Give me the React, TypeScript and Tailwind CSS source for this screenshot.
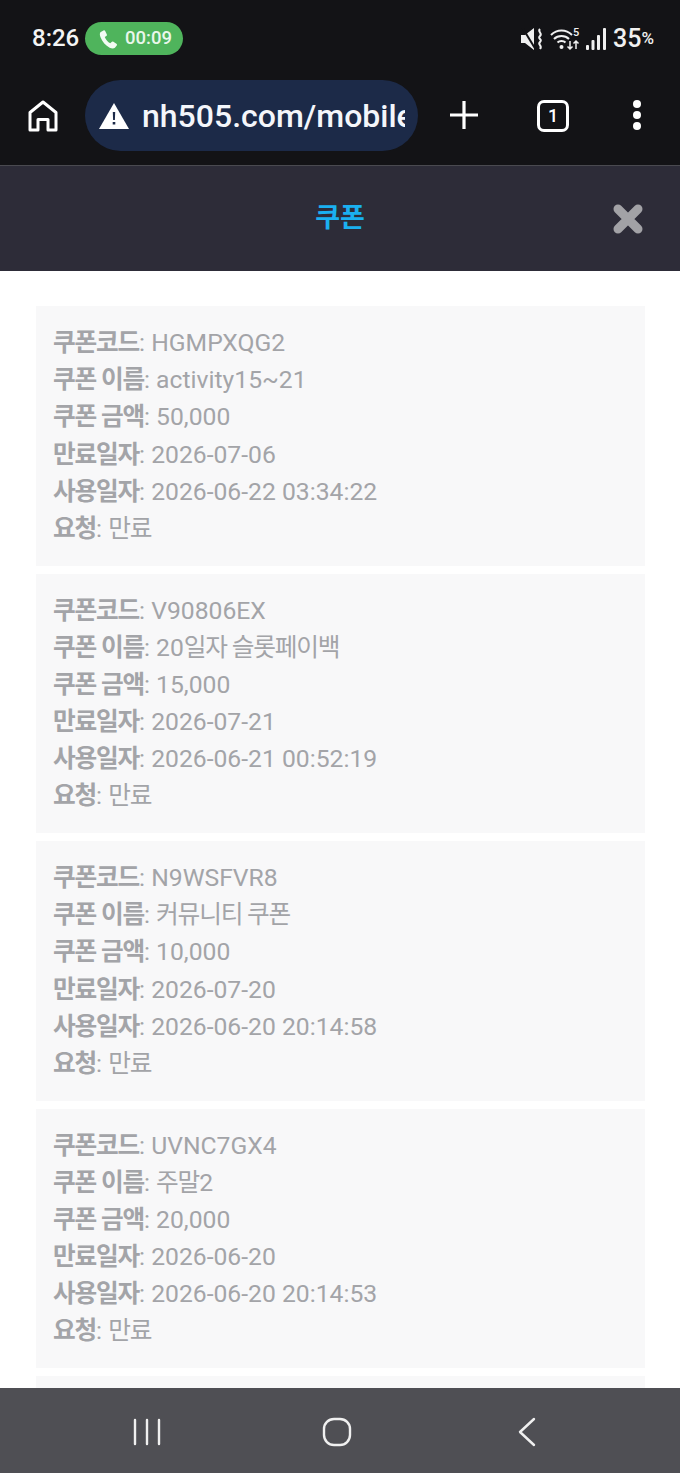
const coupons = [
  { code: 'HGMPXQG2', name: 'activity15~21', amount: '50,000', expires: '2026-07-06', used: '2026-06-22 03:34:22' },
  { code: 'V90806EX', name: '20일자 슬롯페이백', amount: '15,000', expires: '2026-07-21', used: '2026-06-21 00:52:19' },
  { code: 'N9WSFVR8', name: '커뮤니티 쿠폰', amount: '10,000', expires: '2026-07-20', used: '2026-06-20 20:14:58' },
  { code: 'UVNC7GX4', name: '주말2', amount: '20,000', expires: '2026-06-20', used: '2026-06-20 20:14:53' },
];

function StatusBar() {
  return (
    <div className="h-[76px] pt-[22px] pl-[32px] pr-[26px] flex items-start justify-between">
      <div className="flex items-center gap-[7px]">
        <span className="text-[24px] leading-[33px] font-medium text-[#f4f4f4] w-[46px]">8:26</span>
        <div className="w-[98px] h-[33px] rounded-full bg-[#4fb45c] flex items-center pl-[13px] gap-[7px]">
          <svg width="20" height="20" viewBox="0 0 24 24" fill="#f2fbf3">
            <path d="M6.6 1.8 3.3 3.6C1.9 4.5 1.9 7 3 9.8c2.2 5.4 6.2 10 11 12.6 2.4 1.2 5 1.3 6.3 0l2.2-2.6c.6-.8.4-1.6-.4-2.2l-3.6-2.4c-.8-.5-1.6-.4-2.2.3l-1.6 1.7c-2.8-1.5-5.2-4.4-6.6-7.6l1.9-1.3c.7-.5.9-1.3.5-2.1L8.6 2.3c-.5-.8-1.2-1-2-.5Z" />
          </svg>
          <span className="text-[18.5px] leading-none font-medium text-[#e9f7eb]">00:09</span>
        </div>
      </div>
      <div className="flex items-center h-[33px] text-[#f0f0f0]">
        <svg width="23" height="22" viewBox="0 0 23 22" fill="none" className="mr-[6px]">
          <path d="M0 7h4l9-7v22l-9-7H0Z" fill="#f0f0f0" />
          <path d="M1-1 15 22" stroke="#131316" strokeWidth="2" />
          <path d="M19 1c-3 3 3 4 0 7s3 3 0 6 3 3 0 7" stroke="#f0f0f0" strokeWidth="2" />
        </svg>
        <svg width="30" height="24" viewBox="0 0 30 24" fill="none" className="mr-[6px]">
          <path d="M1 8c6-6 15-6 21 0M4 12c4-4 11-4 15 0M7.5 15.5c2-2 6-2 8 0" stroke="#f0f0f0" strokeWidth="2" />
          <circle cx="11.5" cy="20" r="2" fill="#f0f0f0" />
          <path d="M20 14v8m-2.5-2.5 2.5 2.5 2.5-2.500M26 22v-8m-2.5 2.5 2.5-2.5 2.500 2.500" stroke="#f0f0f0" strokeWidth="1.5" />
          <text x="23" y="9" fontSize="11" fontWeight="500" fill="#f0f0f0" fontFamily="Roboto, sans-serif">5</text>
        </svg>
        <svg width="20" height="22" viewBox="0 0 20 22" fill="#f0f0f0" className="mr-[7px]">
          <rect x="0" y="17" width="3" height="5" rx="1" />
          <rect x="5.5" y="12" width="3" height="10" rx="1" />
          <rect x="11" y="7" width="3" height="15" rx="1" />
          <rect x="17" y="0" width="3" height="22" rx="1" />
        </svg>
        <span className="text-[25px] leading-none font-medium text-[#f0f0f0]">35</span>
        <span className="text-[17px] leading-none font-medium text-[#f0f0f0]">%</span>
      </div>
    </div>
  );
}

function Toolbar() {
  return (
    <div className="h-[89px] flex items-start pl-[28px]">
      <svg width="30" height="32" viewBox="0 0 30 32" fill="none" stroke="white" strokeWidth="3" strokeLinejoin="round" className="mt-[24px] shrink-0">
        <path d="M2 30V12.5L15 2l13 10.5V30h-8V19.5H10V30Z" />
      </svg>
      <div className="ml-[27px] w-[333px] h-[71px] mt-[4px] rounded-full bg-[#1c2a48] flex items-center pl-[14px] pr-[13px] shrink-0">
        <svg width="30" height="26" viewBox="0 0 30 26" className="shrink-0">
          <path d="M15 0 30 26H0Z" fill="white" />
          <path d="M13.8 9h2.4l-.3 8h-1.8ZM13.7 19h2.600v2.600h-2.600Z" fill="#1c2a48" />
        </svg>
        <span className="ml-[13px] overflow-hidden whitespace-nowrap text-[32px] leading-none font-medium text-[#f4f6fb]">nh505.com/mobile</span>
      </div>
      <svg width="30" height="30" viewBox="0 0 30 30" stroke="white" strokeWidth="3.2" className="ml-[31px] mt-[24px] shrink-0">
        <path d="M15 1v28M1 15h28" />
      </svg>
      <div className="ml-[58px] mt-[24px] w-[32px] h-[32px] rounded-[7px] border-[3px] border-white flex items-center justify-center text-white text-[18px] leading-none font-medium shrink-0">
        1
      </div>
      <div className="ml-[64px] mt-[24px] flex flex-col gap-[3px] shrink-0">
        <div className="w-[8px] h-[8px] rounded-full bg-white"></div>
        <div className="w-[8px] h-[8px] rounded-full bg-white"></div>
        <div className="w-[8px] h-[8px] rounded-full bg-white"></div>
      </div>
    </div>
  );
}

// hangul in the shot sets tighter than Noto does, latin stays normal
function Tight({ text }: { text: string }) {
  return (
    <>
      {text.split(/([가-힣 ]+)/).map((part, i) =>
        /[가-힣]/.test(part) ? (
          <span key={i} className="tracking-[-1.2px]">{part}</span>
        ) : (
          part
        ),
      )}
    </>
  );
}

function CouponCard({ coupon }: { coupon: (typeof coupons)[number] }) {
  const rows = [
    ['쿠폰코드', coupon.code],
    ['쿠폰 이름', coupon.name],
    ['쿠폰 금액', coupon.amount],
    ['만료일자', coupon.expires],
    ['사용일자', coupon.used],
    ['요청', '만료'],
  ];
  return (
    <div className="bg-[#f8f8f9] h-[259.5px] px-[17px] py-[18px] shrink-0">
      {rows.map(([label, value]) => (
        <div key={label} className="h-[37.2px] leading-[37.2px] text-[24.7px] text-[#a3a4a8] whitespace-nowrap">
          <span className="font-bold tracking-[-1.2px]">{label}</span>: <Tight text={value} />
        </div>
      ))}
    </div>
  );
}

export default function App() {
  return (
    <div className="w-[680px] h-[1473px] overflow-hidden flex flex-col bg-white font-['Roboto','Noto_Sans_CJK_KR',sans-serif]">
      <div className="bg-[#131316] shrink-0">
        <StatusBar />
        <Toolbar />
      </div>
      <div className="h-[106px] shrink-0 bg-[#2d2c38] border-t border-[#4a4a50] flex items-center justify-center relative">
        <span className="text-[27px] font-bold text-[#1ab0f0]">쿠폰</span>
        <svg width="30" height="30" viewBox="0 0 30 30" className="absolute right-[37px] top-[38px]">
          <path d="M5 5 25 25M25 5 5 25" stroke="#a2a2a6" strokeWidth="9" strokeLinecap="round" />
        </svg>
      </div>
      <div className="flex-1 min-h-0 overflow-hidden pl-[36px] pr-[35px] pt-[35px] flex flex-col gap-[8px]">
        {coupons.map((c) => (
          <CouponCard key={c.code} coupon={c} />
        ))}
        <div className="bg-[#f8f8f9] h-[259px] shrink-0"></div>
      </div>
      <div className="h-[85px] shrink-0 bg-[#4f4f54] flex items-start">
        <svg width="28" height="28" viewBox="0 0 28 28" stroke="#f0f0f0" strokeWidth="2.4" strokeLinecap="round" className="ml-[133px] mt-[30px]">
          <path d="M2 2v24M14 2v24M26 2v24" />
        </svg>
        <svg width="30" height="30" viewBox="0 0 30 30" fill="none" stroke="#f0f0f0" strokeWidth="2.4" className="ml-[161px] mt-[29px]">
          <rect x="2" y="2" width="26" height="26" rx="10" />
        </svg>
        <svg width="20" height="30" viewBox="0 0 20 30" fill="none" stroke="#f0f0f0" strokeWidth="2.4" strokeLinecap="round" strokeLinejoin="round" className="ml-[165px] mt-[29px]">
          <path d="M17 2 3 15l14 13" />
        </svg>
      </div>
    </div>
  );
}
